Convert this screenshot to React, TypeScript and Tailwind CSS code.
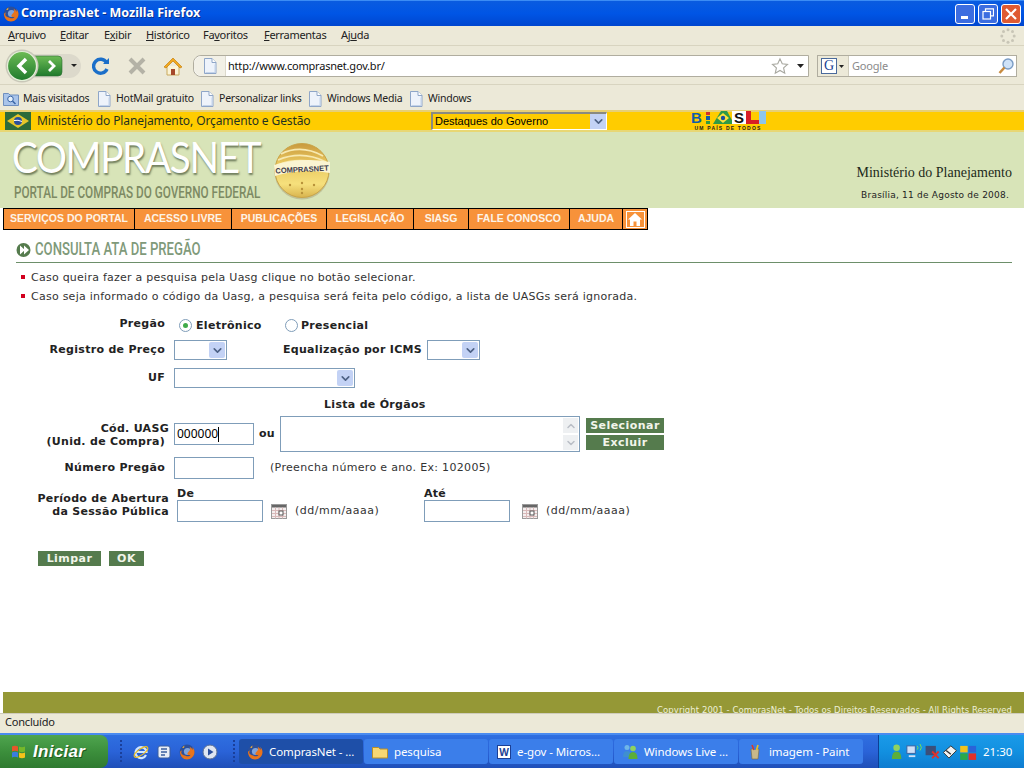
import { ChevronDown, ChevronUp } from "lucide-react";
import type { ReactNode } from "react";

const ui = "font-['Noto_Sans',sans-serif]";
const verdana = "font-['DejaVu_Sans',sans-serif]";

function FirefoxIcon({ size = 16 }: { size?: number }) {
  return (
    <svg width={size} height={size} viewBox="0 0 16 16" className="shrink-0">
      <circle cx="8" cy="8" r="7.5" fill="#2a4f9c" />
      <circle cx="8.5" cy="7.5" r="3.6" fill="#7fa4dc" />
      <path d="M1 8c0 4 3 7.5 7 7.5s7.5-3.2 7.5-7.5c0-2-1-4-2.2-5 .4 1 .5 2 .2 3-.6-1.6-1.7-2.6-3-3.2.9 1.3.9 2.6.3 3.5-.7 1.3-2.6 2.2-2.4 3.6.2 1.2 2 1.4 3.2.8-.8 1.6-3.4 2.2-5 1C1.800 10.600 1.700 8.600 3 6.500 1.800 7 1.200 7.400 1 8z" fill="#e8741c" />
      <path d="M3 3.500 5.500 1.500 5 4z" fill="#f2b035" />
    </svg>
  );
}

function PageIcon({ className = "" }: { className?: string }) {
  return (
    <svg width="14" height="16" viewBox="0 0 14 16" className={`shrink-0 ${className}`}>
      <path d="M1.500.5h7.500l4 4v11h-11.500z" fill="#eef3fb" stroke="#8fa6c8" />
      <path d="M9 .5v4h4" fill="#fff" stroke="#8fa6c8" />
      <path d="M2.500 14.500h9.500v-8" fill="none" stroke="#c3d3ea" />
    </svg>
  );
}

function CalendarIcon() {
  return (
    <svg width="16" height="15" viewBox="0 0 16 15" className="shrink-0">
      <rect x="0.500" y="0.500" width="15" height="14" fill="#f4eeee" stroke="#9a9a9a" />
      <rect x="1" y="1" width="14" height="2.500" fill="#666" />
      <path d="M1 6.500h14M1 9.500h14M1 12.500h14M4.500 3.500v11M8 3.500v11M11.500 3.500v11" stroke="#d9b9b9" />
      <rect x="8" y="7" width="4" height="4" fill="#fff" stroke="#555" />
    </svg>
  );
}

function Grip() {
  return (
    <svg width="4" height="26" viewBox="0 0 4 26" className="shrink-0" fill="#1a3f9a">
      <rect x="1" y="1" width="2" height="2" /><rect x="1" y="5" width="2" height="2" /><rect x="1" y="9" width="2" height="2" />
      <rect x="1" y="13" width="2" height="2" /><rect x="1" y="17" width="2" height="2" /><rect x="1" y="21" width="2" height="2" />
    </svg>
  );
}

function SelectBox({ width, children }: { width: string; children?: ReactNode }) {
  return (
    <div className={`${width} h-[20px] flex items-center justify-between border border-[#7f9db9] bg-white p-px shrink-0`}>
      <span className="pl-1 text-[11px]">{children}</span>
      <span className="w-[16px] h-[16px] flex items-center justify-center bg-[#c3d2f5] rounded-[2px]">
        <ChevronDown size={13} strokeWidth={3} className="text-[#4d6185]" />
      </span>
    </div>
  );
}

function TextBox({ width, children }: { width: string; children?: ReactNode }) {
  return (
    <div className={`${width} h-[22px] border border-[#7f9db9] bg-white shrink-0 flex items-center pl-[2px] text-[12px] text-black ${ui}`}>
      {children}
    </div>
  );
}

function GreenButton({ width, children }: { width: string; children: ReactNode }) {
  return (
    <button className={`${width} h-[15px] bg-[#557b4d] text-[#f2f5ea] text-[11px] leading-[15px] font-bold tracking-[0.45px] text-center ${verdana}`}>
      {children}
    </button>
  );
}

function NavItem({ width, children }: { width: string; children: ReactNode }) {
  return (
    <div className={`${width} h-full shrink-0 flex items-center justify-center whitespace-nowrap border-r border-black text-[10.500px] font-bold text-[#fdf3e6] font-['Liberation_Sans',sans-serif]`}>
      {children}
    </div>
  );
}

function TaskButton({ icon, label, active }: { icon: ReactNode; label: string; active?: boolean }) {
  return (
    <div className={`w-[124px] h-[25px] mr-px rounded-[3px] flex items-center gap-[6px] pl-[8px] text-[11.500px] tracking-[-0.1px] text-white whitespace-nowrap shrink-0 ${active ? "bg-[#1e4fa8]" : "bg-[#3b7eea]"}`}>
      {icon}
      <span>{label}</span>
    </div>
  );
}

export default function App() {
  return (
    <div className={`w-[1024px] h-[768px] overflow-hidden flex flex-col bg-white text-black ${ui}`}>
      {/* Title bar */}
      <div className="h-[26px] shrink-0 flex items-center pl-[3px] pr-[3px] bg-gradient-to-b from-[#0a5be0] via-[#0055e5] to-[#0046cf] border-t border-[#3b8cf5]">
        <FirefoxIcon />
        <span className="ml-[2px] text-[12.500px] font-bold text-white [text-shadow:1px_1px_#0a2f8c]">ComprasNet - Mozilla Firefox</span>
        <div className="ml-auto flex gap-[3px]">
          <div className="w-[20px] h-[20px] rounded-[3px] border border-white bg-[#3c6de0] flex items-end pb-[4px] pl-[5px]">
            <span className="w-[7px] h-[3px] bg-white" />
          </div>
          <div className="w-[20px] h-[20px] rounded-[3px] border border-white bg-[#3c6de0] flex items-center justify-center">
            <svg width="12" height="12" viewBox="0 0 12 12" fill="none" stroke="white">
              <path d="M3.500 3V.8h8v7H9" strokeWidth="1.200" />
              <rect x="1" y="3.500" width="7.500" height="7.500" strokeWidth="1.200" />
            </svg>
          </div>
          <div className="w-[20px] h-[20px] rounded-[3px] border border-white bg-[#df5a32] flex items-center justify-center">
            <svg width="12" height="12" viewBox="0 0 12 12" stroke="white" strokeWidth="2.200">
              <path d="M1 1l10 10M11 1L1 11" />
            </svg>
          </div>
        </div>
      </div>

      {/* Menu bar */}
      <div className="h-[20px] shrink-0 flex items-center bg-[#ece9d8] border-b border-[#d8d4c0] pl-[8px] pr-[8px] text-[11px] tracking-[-0.3px] text-[#222]">
        <span className="w-[52px]"><u>A</u>rquivo</span>
        <span className="w-[44px]"><u>E</u>ditar</span>
        <span className="w-[42px]">E<u>x</u>ibir</span>
        <span className="w-[57px]"><u>H</u>istórico</span>
        <span className="w-[61px]">Fa<u>v</u>oritos</span>
        <span className="w-[77px]"><u>F</u>erramentas</span>
        <span>Aj<u>u</u>da</span>
        <svg width="16" height="16" viewBox="0 0 16 16" className="ml-auto" fill="#c8c5b6">
          <circle cx="8" cy="1.800" r="1.500" /><circle cx="12.500" cy="3.500" r="1.500" /><circle cx="14.200" cy="8" r="1.500" />
          <circle cx="12.500" cy="12.500" r="1.500" /><circle cx="8" cy="14.200" r="1.500" /><circle cx="3.500" cy="12.500" r="1.500" />
          <circle cx="1.800" cy="8" r="1.500" /><circle cx="3.500" cy="3.500" r="1.500" />
        </svg>
      </div>

      {/* Navigation toolbar */}
      <div className="h-[39px] shrink-0 flex items-center bg-[#ece9d8] border-b border-[#d8d4c0] pl-[5px] pt-[2px]">
        <svg width="76" height="34" viewBox="0 0 76 34" className="shrink-0">
          <defs>
            <linearGradient id="gb" x1="0" y1="0" x2="0" y2="1">
              <stop offset="0" stopColor="#6dbb55" />
              <stop offset="1" stopColor="#1f7a2c" />
            </linearGradient>
          </defs>
          <path d="M20 5h44a12 12 0 0 1 0 24H20z" fill="#dcd9cb" />
          <path d="M20 7h33q4 0 4 4v12q0 4-4 4H20z" fill="url(#gb)" stroke="#2c6b32" strokeWidth="0.600" />
          <circle cx="17" cy="17" r="16.500" fill="#c9c7b8" />
          <circle cx="17" cy="17" r="14.500" fill="url(#gb)" stroke="#e4efd8" strokeWidth="1.200" />
          <path d="M21 10l-7 7 7 7" fill="none" stroke="#fff" strokeWidth="3.500" />
          <path d="M44 12l5 5-5 5" fill="none" stroke="#fff" strokeWidth="2.800" />
          <path d="M66 15h6l-3 3z" fill="#222" />
        </svg>
        <svg width="18" height="18" viewBox="0 0 18 18" className="ml-[11px] shrink-0" fill="none">
          <path d="M14.500 5.500A7 7 0 1 0 15 12" stroke="#1b6fc9" strokeWidth="3.400" />
          <path d="M11 7h6V1z" fill="#1b6fc9" />
        </svg>
        <svg width="18" height="18" viewBox="0 0 18 18" className="ml-[18px] shrink-0" stroke="#b4b2a6" strokeWidth="4">
          <path d="M2 2l14 14M16 2L2 16" />
        </svg>
        <svg width="20" height="19" viewBox="0 0 20 19" className="ml-[17px] shrink-0">
          <path d="M4 9v9h12V9" fill="#fbf3d5" stroke="#c9a95c" />
          <rect x="8" y="12" width="4" height="6" fill="#a5482a" />
          <path d="M10 1L1 10l2 1 7-7 7 7 2-1z" fill="#f2a91f" stroke="#c47f10" strokeWidth="0.700" />
        </svg>
        <div className="ml-[10px] w-[616px] h-[22px] shrink-0 flex items-center border border-[#b0ad9f] bg-white rounded-l-[8px]">
          <div className="w-[32px] h-full flex items-center justify-center bg-[#f2f0e6] border-r border-[#dcd9cc] rounded-l-[8px]">
            <PageIcon />
          </div>
          <span className="ml-[2px] text-[11px] tracking-[-0.2px] text-[#111]">http://www.comprasnet.gov.br/</span>
          <svg width="18" height="18" viewBox="0 0 24 24" fill="none" stroke="#a8a8a0" strokeWidth="1.500" className="ml-auto mr-[8px]">
            <path d="M12 2.500l3 6.500 7 .8-5.200 4.700 1.500 7-6.300-3.600-6.300 3.600 1.500-7L2 9.800 9 9z" />
          </svg>
          <svg width="7" height="4" viewBox="0 0 7 4" className="mr-[4px]"><path d="M0 0h7L3.500 4z" fill="#222" /></svg>
        </div>
        <div className="ml-[8px] w-[200px] h-[22px] shrink-0 flex items-center border border-[#b0ad9f] bg-white">
          <div className="w-[31px] h-full flex items-center bg-[#ece9d8] border-r border-[#cfccbc] pl-[3px] gap-[2px]">
            <span className="w-[16px] h-[16px] flex items-center justify-center bg-white border border-[#4a6a9c] text-[14px] leading-none text-[#1c3f94] font-['Liberation_Serif',serif]">G</span>
            <svg width="5" height="3" viewBox="0 0 7 4"><path d="M0 0h7L3.500 4z" fill="#222" /></svg>
          </div>
          <span className="ml-[3px] text-[11px] tracking-[-0.2px] text-[#8a8a8a]">Google</span>
          <svg width="18" height="18" viewBox="0 0 18 18" className="ml-auto mr-[1px]">
            <circle cx="11" cy="7" r="5" fill="#cfe2f7" stroke="#7a9cc4" strokeWidth="1.400" />
            <path d="M7.500 10.500 2.500 16" stroke="#c88b3f" strokeWidth="2.600" />
          </svg>
        </div>
      </div>

      {/* Bookmarks bar */}
      <div className="h-[25px] shrink-0 flex items-center bg-[#ece9d8] pl-[3px] pt-[2px] text-[10.500px] tracking-[-0.2px] text-[#222] whitespace-nowrap">
        <svg width="16" height="15" viewBox="0 0 16 15" className="shrink-0 mr-[4px]">
          <path d="M.5 2.500h5l1.500 1.500h8.500v10.500H.5z" fill="#a9c4ea" stroke="#6f8fbf" />
          <circle cx="7.500" cy="8" r="2.800" fill="#e6f0fb" stroke="#3a66a8" />
          <path d="M9.500 10l3 3" stroke="#3a66a8" strokeWidth="1.500" />
        </svg>
        <span className="w-[74px]">Mais visitados</span>
        <PageIcon />
        <span className="ml-[5px] w-[84px]">HotMail gratuito</span>
        <PageIcon />
        <span className="ml-[5px] w-[89px]">Personalizar links</span>
        <PageIcon />
        <span className="ml-[5px] w-[82px]">Windows Media</span>
        <PageIcon />
        <span className="ml-[5px]">Windows</span>
      </div>

      {/* Government bar */}
      <div className="h-[22px] shrink-0 flex items-center bg-[#ffcc00] border-t-2 border-b-2 border-t-[#e6cf77] border-b-[#e8d774]">
        <svg width="26" height="18" viewBox="0 0 26 18" className="ml-[5px] shrink-0">
          <rect width="26" height="18" fill="#2e6b3a" />
          <path d="M13 2l11 7-11 7L2 9z" fill="#e6c62a" />
          <circle cx="13" cy="9" r="4" fill="#2a4f9c" />
          <path d="M9 8.500q4-1 8 1" stroke="#fff" fill="none" />
        </svg>
        <span className="ml-[6px] w-[394px] text-[12px] tracking-[-0.1px] text-[#1f3320]">Ministério do Planejamento, Orçamento e Gestão</span>
        <div className="w-[176px] h-[18px] shrink-0 flex items-center justify-between border-t-2 border-l-2 border-t-[#8a8a80] border-l-[#8a8a80] border-b border-r border-b-white border-r-white">
          <span className="pl-[2px] text-[11px] font-['Liberation_Sans',sans-serif]">Destaques do Governo</span>
          <span className="w-[16px] h-[15px] flex items-center justify-center bg-[#c3d2f5]">
            <ChevronDown size={13} strokeWidth={3} className="text-[#4d6185]" />
          </span>
        </div>
        <svg width="75" height="20" viewBox="0 0 75 20" className="ml-[84px] shrink-0">
          <text x="0" y="12" fontSize="15" fontWeight="900" fontFamily="Liberation Sans" fill="#0f5da8">B</text>
          <rect x="15" y="1" width="4" height="3" fill="#d0312d" />
          <rect x="15" y="5" width="4" height="4" fill="#0f5da8" />
          <rect x="15" y="10" width="4" height="3" fill="#2f9a46" />
          <path d="M22 13L30 0h6l7 13z" fill="#2f9a46" />
          <path d="M32 2l6 5-6 5-6-5z" fill="#ffe23a" />
          <circle cx="32" cy="7" r="2.200" fill="#1c4fa0" />
          <rect x="41" y="0" width="14" height="13" fill="#fff" />
          <text x="43" y="12" fontSize="15" fontWeight="900" fontFamily="Liberation Sans" fill="#111">S</text>
          <rect x="55" y="0" width="5" height="13" fill="#d81f26" />
          <rect x="60" y="9" width="8" height="4" fill="#d81f26" />
          <rect x="68" y="0" width="7" height="13" fill="#8ec6ea" />
          <text x="37" y="19" textAnchor="middle" fontSize="5" fontWeight="700" letterSpacing="1.200" fontFamily="Liberation Sans" fill="#222">UM PAÍS DE TODOS</text>
        </svg>
      </div>

      {/* Header */}
      <div className="h-[76px] shrink-0 flex bg-[#d8e4b8] pl-[12px] pr-[12px]">
        <div className="w-[250px] flex flex-col">
          <span className="mt-[2px] origin-left scale-x-[0.9] text-[43px] leading-[46px] font-normal text-white tracking-[-1.500px] whitespace-nowrap font-['Lato',sans-serif] [text-shadow:1px_2px_2px_#6f7d5c]">COMPRASNET</span>
          <span className="ml-[2px] origin-left scale-x-[0.69] mt-[2px] text-[17px] leading-[20px] font-medium text-[#7d8a63] whitespace-nowrap font-['Roboto',sans-serif]">PORTAL DE COMPRAS DO GOVERNO FEDERAL</span>
        </div>
        <svg width="58" height="60" viewBox="0 0 58 60" className="ml-[11px] mt-[9px] shrink-0">
          <defs>
            <linearGradient id="coin" x1="0" y1="0" x2="0" y2="1">
              <stop offset="0" stopColor="#c99a3e" />
              <stop offset="0.35" stopColor="#e8c65e" />
              <stop offset="0.75" stopColor="#f6e07c" />
              <stop offset="1" stopColor="#d9b44e" />
            </linearGradient>
          </defs>
          <circle cx="29" cy="31" r="27.500" fill="#a8a078" opacity="0.500" />
          <circle cx="29" cy="29.500" r="27" fill="url(#coin)" stroke="#c9a448" />
          <path d="M8 13q20-10 42 2M5 19q24-10 48 2M4 24q25-9 50 1" stroke="#f7e9b0" strokeWidth="1.800" fill="none" />
          <path d="M1 24q28-8 56-3v11q-28-5-55 3z" fill="#fbf4d2" />
          <text x="29" y="31" textAnchor="middle" fontSize="7.500" fontWeight="700" fill="#3d3a4a" fontFamily="Liberation Sans" transform="rotate(-3 29 29)">COMPRASNET</text>
          <circle cx="29" cy="42" r="1.200" fill="#b8923a" /><circle cx="17" cy="44" r="1.200" fill="#b8923a" /><circle cx="41" cy="44" r="1.200" fill="#b8923a" /><circle cx="29" cy="48" r="1.200" fill="#b8923a" /><circle cx="29" cy="52" r="1.200" fill="#b8923a" />
        </svg>
        <div className="ml-auto flex flex-col items-end">
          <span className="mt-[33px] text-[14px] leading-[16px] text-[#1c2a1a] font-['Liberation_Serif',serif]">Ministério do Planejamento</span>
          <span className={`mt-[7px] mr-[3px] text-[9px] leading-[14px] tracking-[0.22px] text-[#222] ${verdana}`}>Brasília, 11 de Agosto de 2008.</span>
        </div>
      </div>

      {/* Orange nav */}
      <div className="ml-[3px] w-[645px] h-[22px] shrink-0 flex bg-[#f7923a] border border-black">
        <NavItem width="w-[131px]">SERVIÇOS DO PORTAL</NavItem>
        <NavItem width="w-[97px]">ACESSO LIVRE</NavItem>
        <NavItem width="w-[95px]">PUBLICAÇÕES</NavItem>
        <NavItem width="w-[87px]">LEGISLAÇÃO</NavItem>
        <NavItem width="w-[55px]">SIASG</NavItem>
        <NavItem width="w-[101px]">FALE CONOSCO</NavItem>
        <NavItem width="w-[53px]">AJUDA</NavItem>
        <div className="flex-1 flex items-center justify-center">
          <div className="w-[19px] h-[17px] flex items-center justify-center border border-white">
            <svg width="14" height="13" viewBox="0 0 14 13" fill="white"><path d="M7 0L0 6.500h2V13h3.500V8.500h3V13H12V6.500h2z" /></svg>
          </div>
        </div>
      </div>

      {/* Content */}
      <div className={`flex-1 min-h-0 ${verdana}`}>
        <div className="ml-[16px] mr-[12px] mt-[11px] h-[22px] flex items-start border-b border-[#6d8f6a]">
          <svg width="15" height="14" viewBox="0 0 15 14" className="mt-[2px] shrink-0">
            <circle cx="7.500" cy="7" r="7" fill="#557b4d" />
            <path d="M4 2.500l5 4.500-5 4.500M8 2.500l5 4.500-5 4.500" fill="#fff" />
          </svg>
          <span className="ml-[4px] -mt-px origin-left scale-x-[0.73] text-[18px] leading-[18px] font-medium text-[#7f9a7a] whitespace-nowrap font-['Roboto',sans-serif]">CONSULTA ATA DE PREGÃO</span>
        </div>

        <div className="mt-[6px] pl-[21px] text-[11px] tracking-[0.25px] text-[#333]">
          <div className="h-[19px] flex items-center">
            <span className="w-[4px] h-[4px] bg-[#d2001e] mr-[6px] -mt-[3px]" />
            Caso queira fazer a pesquisa pela Uasg clique no botão selecionar.
          </div>
          <div className="h-[19px] flex items-center">
            <span className="w-[4px] h-[4px] bg-[#d2001e] mr-[6px] -mt-[3px]" />
            Caso seja informado o código da Uasg, a pesquisa será feita pelo código, a lista de UASGs será ignorada.
          </div>
        </div>

        <div className="text-[11px] text-[#222] font-bold tracking-[0.3px]">
          <div className="mt-[8px] h-[20px] flex items-center">
            <span className="w-[165px] text-right pb-[2px]">Pregão</span>
            <span className="ml-[14px] w-[13px] h-[13px] rounded-full border border-[#7f9db9] bg-white flex items-center justify-center">
              <span className="w-[5px] h-[5px] rounded-full bg-[#3faa4a]" />
            </span>
            <span className="ml-[4px] w-[89px] pt-[2px]">Eletrônico</span>
            <span className="w-[13px] h-[13px] rounded-full border border-[#7f9db9] bg-white" />
            <span className="ml-[3px] pt-[2px]">Presencial</span>
          </div>

          <div className="mt-[5px] h-[20px] flex items-center">
            <span className="w-[165px] text-right pt-[1px]">Registro de Preço</span>
            <span className="ml-[9px]"><SelectBox width="w-[53px]" /></span>
            <span className="ml-[56px] w-[144px] pt-[1px]">Equalização por ICMS</span>
            <SelectBox width="w-[53px]" />
          </div>

          <div className="mt-[8px] h-[20px] flex items-center">
            <span className="w-[165px] text-right">UF</span>
            <span className="ml-[9px]"><SelectBox width="w-[181px]" /></span>
          </div>

          <div className="mt-[10px] h-[14px] pl-[324px] leading-[14px]">Lista de Órgãos</div>

          <div className="mt-[4px] h-[36px] flex items-center">
            <span className="w-[169px] text-right leading-[13px] pt-[1px]">
              Cód. UASG<br /><span className="pr-[4px]">(Unid. de Compra)</span>
            </span>
            <span className="ml-[5px]">
              <TextBox width="w-[80px]">
                <span className="font-normal tracking-normal">000000</span>
                <span className="w-px h-[15px] bg-black" />
              </TextBox>
            </span>
            <span className="ml-[5px] w-[21px]">ou</span>
            <div className="w-[300px] h-[36px] flex justify-end border border-[#7f9db9] bg-white shrink-0">
              <div className="w-[17px] h-full flex flex-col">
                <span className="h-1/2 flex items-center justify-center bg-[#eef0f2] border border-white"><ChevronUp size={12} strokeWidth={3} className="text-[#b9bec6]" /></span>
                <span className="h-1/2 flex items-center justify-center bg-[#eef0f2] border border-white"><ChevronDown size={12} strokeWidth={3} className="text-[#b9bec6]" /></span>
              </div>
            </div>
            <div className="ml-[6px] flex flex-col gap-[2px]">
              <GreenButton width="w-[78px]">Selecionar</GreenButton>
              <GreenButton width="w-[78px]">Excluir</GreenButton>
            </div>
          </div>

          <div className="mt-[5px] h-[22px] flex items-center">
            <span className="w-[165px] text-right pt-[1px]">Número Pregão</span>
            <span className="ml-[9px]"><TextBox width="w-[80px]" /></span>
            <span className="ml-[16px] font-normal tracking-[0.33px] text-[#333]">(Preencha número e ano. Ex: 102005)</span>
          </div>

          <div className="mt-[9px] h-[34px] flex items-end">
            <span className="w-[169px] text-right leading-[13px] pb-[4px]">Período de Abertura<br />da Sessão Pública</span>
            <div className="ml-[8px] flex flex-col">
              <span className="h-[12px] leading-[12px]">De</span>
              <div className="flex items-center">
                <TextBox width="w-[86px]" />
                <span className="ml-[8px]"><CalendarIcon /></span>
                <span className="ml-[8px] w-[129px] font-normal tracking-[0.5px] text-[#333]">(dd/mm/aaaa)</span>
              </div>
            </div>
            <div className="flex flex-col">
              <span className="h-[12px] leading-[12px]">Até</span>
              <div className="flex items-center">
                <TextBox width="w-[86px]" />
                <span className="ml-[12px]"><CalendarIcon /></span>
                <span className="ml-[8px] font-normal tracking-[0.5px] text-[#333]">(dd/mm/aaaa)</span>
              </div>
            </div>
          </div>

          <div className="mt-[29px] ml-[38px] flex gap-[8px]">
            <GreenButton width="w-[63px]">Limpar</GreenButton>
            <GreenButton width="w-[35px]">OK</GreenButton>
          </div>
        </div>
      </div>

      {/* Footer, cut off by the status bar as in the reference */}
      <div className="ml-[3px] h-[21px] shrink-0 overflow-hidden bg-[#959836] flex justify-end pr-[12px]">
        <span className={`pt-[12px] text-[8.500px] leading-[12px] tracking-[0.06px] text-[#eef0d8] whitespace-nowrap ${verdana}`}>Copyright 2001 - ComprasNet - Todos os Direitos Reservados - All Rights Reserved</span>
      </div>

      {/* Status bar */}
      <div className="h-[20px] shrink-0 flex items-center pl-[5px] pb-[2px] bg-[#ece9d8] border-t border-[#cfccbc] text-[11px] tracking-[-0.2px] text-[#222]">Concluído</div>

      {/* Taskbar */}
      <div className="h-[35px] shrink-0 flex items-center bg-gradient-to-b from-[#2f6fe0] via-[#2a63d8] to-[#1f4fb8] border-t-2 border-[#4a8bf0]">
        <div className="w-[108px] h-full shrink-0 flex items-center pl-[11px] gap-[6px] rounded-r-[8px] bg-gradient-to-b from-[#4fa54f] via-[#3c8f3c] to-[#2f7a30]">
          <svg width="16" height="16" viewBox="0 0 16 16" className="shrink-0">
            <path d="M1 2.500q3-1.500 6 0v5q-3-1.500-6 0z" fill="#e8562a" />
            <path d="M8 2.500q3 1.500 6 0v5q-3 1.500-6 0z" fill="#76b82a" />
            <path d="M1 8.500q3-1.500 6 0v5q-3-1.500-6 0z" fill="#3b7de0" />
            <path d="M8 8.500q3 1.500 6 0v5q-3 1.500-6 0z" fill="#f6c21a" />
          </svg>
          <span className="text-[17px] tracking-[0.3px] font-bold italic text-white [text-shadow:1px_1px_#1f5a20] font-['Liberation_Sans',sans-serif]">Iniciar</span>
        </div>
        <div className="ml-[11px] w-[120px] shrink-0 flex items-center">
          <Grip />
          <div className="ml-[10px] flex items-center gap-[7px]">
            <svg width="16" height="16" viewBox="0 0 16 16" fill="none" className="shrink-0">
              <path d="M13 11a5.500 5.500 0 1 1 .5-3H4" stroke="#cfe6ff" strokeWidth="2.200" />
              <ellipse cx="8" cy="8" rx="8" ry="3" transform="rotate(-35 8 8)" stroke="#f6c21a" strokeWidth="1" />
            </svg>
            <svg width="16" height="16" viewBox="0 0 16 16" className="shrink-0">
              <rect x="2" y="2" width="12" height="12" rx="2" fill="#e9eef6" stroke="#3a5f9f" />
              <path d="M5 5h6M5 8h6M5 11h4" stroke="#3a5f9f" strokeWidth="1.300" />
            </svg>
            <FirefoxIcon />
            <svg width="16" height="16" viewBox="0 0 16 16" className="shrink-0">
              <circle cx="8" cy="8" r="7" fill="#dfe6f2" stroke="#5a6f94" />
              <path d="M6 4.500l5.500 3.500-5.500 3.500z" fill="#2a4f9c" />
            </svg>
          </div>
          <span className="ml-[14px]"><Grip /></span>
        </div>
        <TaskButton active icon={<FirefoxIcon />} label="ComprasNet - ..." />
        <TaskButton
          label="pesquisa"
          icon={
            <svg width="16" height="14" viewBox="0 0 16 14" className="shrink-0">
              <path d="M.5 2.500h6l1.500 1.500h7.500v9H.5z" fill="#f7d774" stroke="#b88f2a" />
            </svg>
          }
        />
        <TaskButton
          label="e-gov - Micros..."
          icon={
            <span className="w-[14px] h-[14px] flex items-center justify-center bg-white border border-[#1c3f94] text-[10px] font-bold leading-none text-[#1c3f94] shrink-0">W</span>
          }
        />
        <TaskButton
          label="Windows Live ..."
          icon={
            <svg width="16" height="15" viewBox="0 0 16 15" className="shrink-0">
              <circle cx="5" cy="3.500" r="2.500" fill="#6fb6e8" />
              <path d="M1 13q0-6 4-6t4 6z" fill="#3f8fd0" />
              <circle cx="11" cy="4.500" r="2.800" fill="#8fd25f" />
              <path d="M6.500 15q0-7 4.500-7t4.500 7z" fill="#5cae38" />
            </svg>
          }
        />
        <TaskButton
          label="imagem - Paint"
          icon={
            <svg width="16" height="16" viewBox="0 0 16 16" className="shrink-0">
              <path d="M4 5h8l-1 10H5z" fill="#c7b98a" stroke="#7a6a3a" strokeWidth="0.600" />
              <path d="M5 1l2 5" stroke="#d93a2a" strokeWidth="1.600" />
              <path d="M8 0v6" stroke="#3a7de0" strokeWidth="1.600" />
              <path d="M11 1L9.500 6" stroke="#f2c21a" strokeWidth="1.600" />
            </svg>
          }
        />
        <div className="ml-[14px] flex-1 h-full flex items-center pl-[12px] bg-gradient-to-b from-[#1a9ae8] via-[#1290e0] to-[#0f7cd0] border-l border-[#0c3f96] text-[11.500px] text-white">
          <svg width="86" height="17" viewBox="0 0 92 18" className="shrink-0">
            <circle cx="6" cy="5" r="3.500" fill="#8fd25f" />
            <path d="M1 17q0-8 5-8t5 8z" fill="#5cae38" />
            <rect x="17" y="3" width="9" height="8" fill="#cfe0f7" stroke="#3a5f9f" />
            <path d="M19 14h7" stroke="#cfe0f7" strokeWidth="2" />
            <path d="M28 3q2 2 0 4M31 1q3 4 0 7" stroke="#7fe04a" fill="none" />
            <rect x="37" y="3" width="11" height="10" fill="#3a4f7a" />
            <path d="M44 9l7 7M51 9l-7 7" stroke="#e0312a" strokeWidth="2" />
            <path d="M56 10l8-7 6 5-8 8z" fill="#f2f2f2" stroke="#333" />
            <path d="M59 8l5 4" stroke="#333" strokeWidth="1.500" />
            <rect x="74" y="3" width="8" height="7" fill="#f2c21a" />
            <rect x="83" y="3" width="8" height="7" fill="#2a63d8" />
            <rect x="74" y="11" width="8" height="7" fill="#2aa84a" />
            <rect x="83" y="11" width="8" height="7" fill="#e0312a" />
          </svg>
          <span className="ml-[6px]">21:30</span>
        </div>
      </div>
    </div>
  );
}
